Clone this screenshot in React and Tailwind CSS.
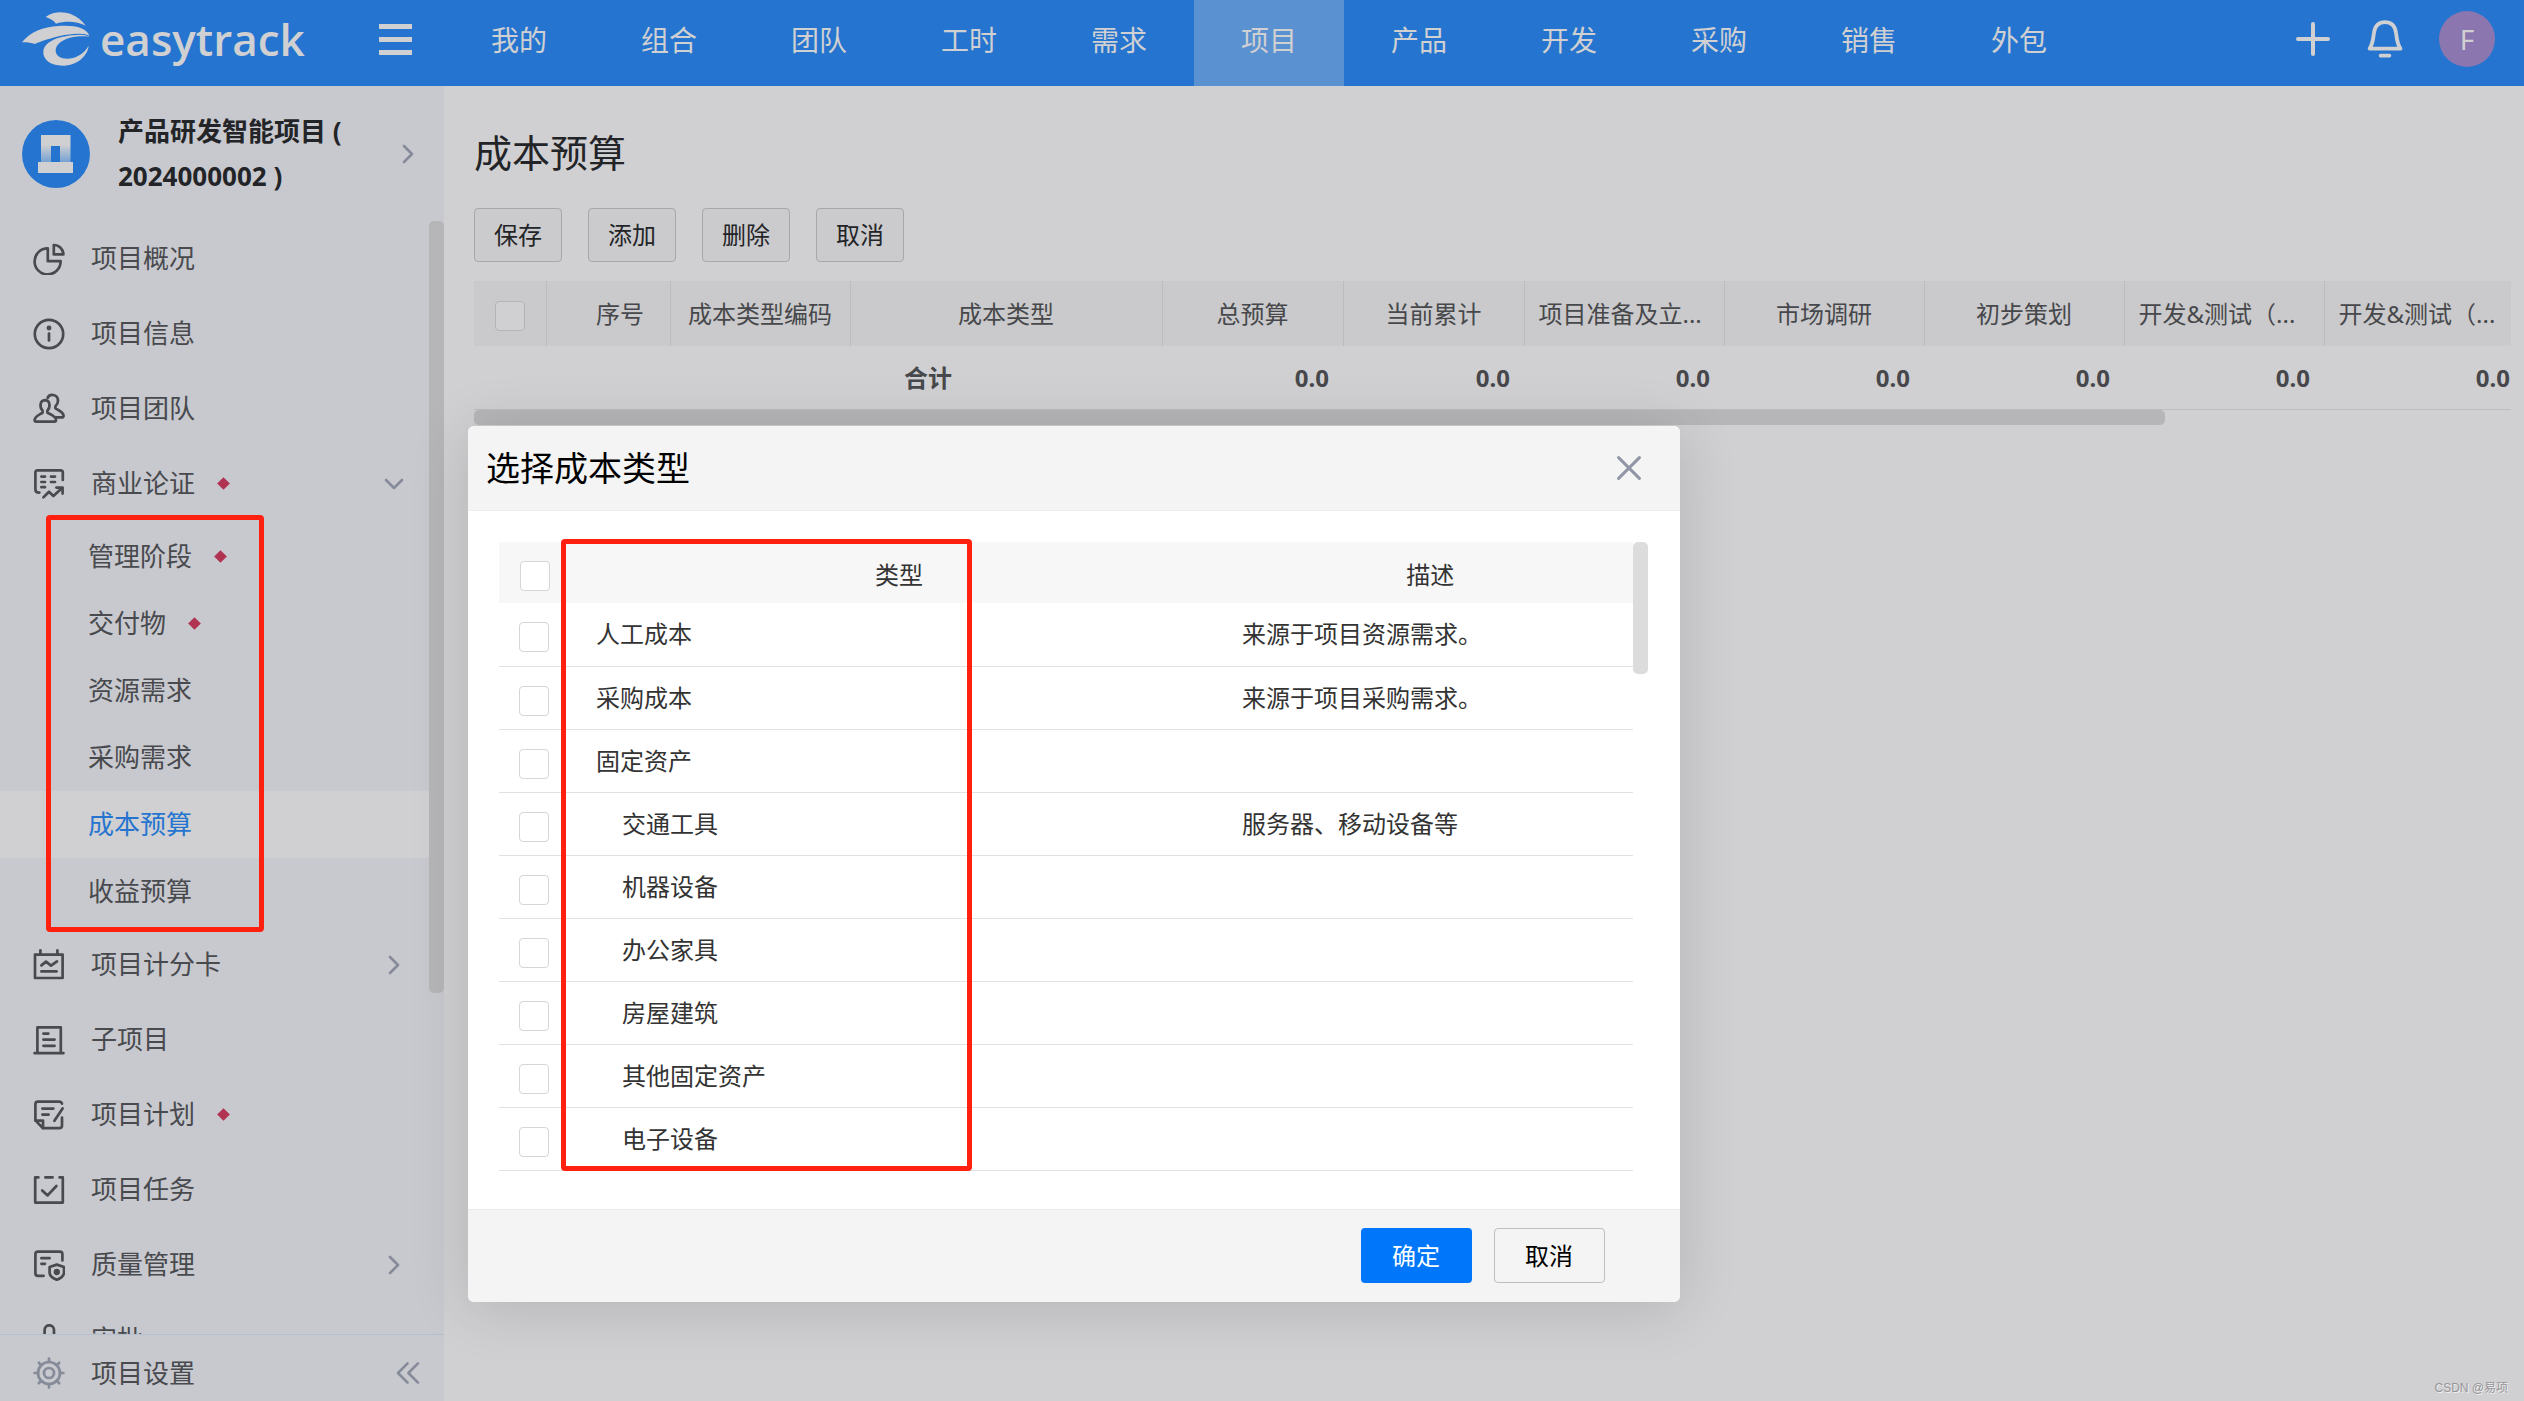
import { useState } from 'react';
import clsx from 'clsx';

const topMenus = ['我的', '组合', '团队', '工时', '需求', '项目', '产品', '开发', '采购', '销售', '外包'];

const icons = {
  overview: (
    <>
      <path d="M14.8 5.4 V18.2 H27.6 A13 13 0 1 1 14.8 5.4 Z" />
      <path d="M20.8 2 A9.6 9.6 0 0 1 30.4 11.4 H20.8 Z" />
    </>
  ),
  info: (
    <>
      <circle cx="16" cy="16" r="14.2" />
      <path d="M16 15.5 V22.5" />
      <circle cx="16" cy="10" r="1.1" />
    </>
  ),
  team: (
    <>
      <path d="M9.6 17.6 C6.5 14.5 6.5 7.4 12 7.2 C17.5 7.4 17.5 14.5 14.4 17.6 V19.6 C17 21.4 23 22.6 23 27 Q23 28.6 21.4 28.6 H3.2 Q1.6 28.6 1.6 27 C1.8 23 7.5 21.4 9.6 19.6 Z" />
      <path d="M14.6 5 C16 0.8 24.6 0.4 25 7.4 C25 10 23.8 12 22.4 13.4 V15.2 C25 17.4 30.6 18.8 30.6 23 Q30.4 24.4 28.6 24.4 H23" />
    </>
  ),
  business: (
    <>
      <path d="M29.8 12 V4.6 Q29.8 2.4 27.6 2.4 H4.6 Q2.4 2.4 2.4 4.6 V21.4 Q2.4 24.6 6.4 24.6" />
      <path d="M8.4 8.6 H12 M18 8.6 H22 M8.4 14 H12 M18 14 H22 M8.4 19.2 H12" />
      <path d="M10.4 29.4 L16 23.8 L20.4 28 L29 20 M23.4 19.6 H29.6 V25.6" />
    </>
  ),
  score: (
    <>
      <path d="M2 5.6 H29.6 V29 H2 Z M7.4 5.6 V1.4 M24.4 5.6 V1.4" />
      <path d="M8.4 16.4 L13 12.6 L18 16.6 L24 12.4 M8.4 22.4 H23.6" />
    </>
  ),
  sub: (
    <>
      <path d="M4.4 28.8 V3.4 H27.8 V28.8 M1.6 29.2 H30.4" />
      <path d="M10.4 9.6 H15.4 M10.4 15.6 H21.6 M10.4 21.8 H21.6" />
    </>
  ),
  plan: (
    <>
      <path d="M29 4.6 Q28.4 2.6 26.2 2.6 H5 Q2.4 2.6 2.4 5.2 V21.4 L10 29.2 H26.4 Q29 29.2 29 26.6 V18.6" />
      <path d="M2.4 21.6 H10 V29 M9.4 9.6 H20.4 M9.4 15.6 H15.6 M29.6 9.4 L21.4 21.8" />
    </>
  ),
  task: (
    <path d="M5.4 3.4 H2.2 V28.6 H29.8 V3.4 H26.6 M12.4 3.4 H19.6 M9.2 16.4 L14.6 21.4 L23.4 12" />
  ),
  quality: (
    <>
      <path d="M29.4 11.4 V5.2 Q29.4 2.6 26.8 2.6 H5 Q2.4 2.6 2.4 5.2 V24.2 Q2.4 26.8 5 26.8 H10.6 M8.4 9.2 H16.6 M8.4 14.8 H12" />
      <path d="M23.8 15.6 L31 18 V24 Q30.4 28.4 23.8 30.8 Q17.2 28.4 16.6 24 V18 Z" />
      <circle cx="23.8" cy="23" r="1.8" fill="currentColor" />
    </>
  ),
  approve: (
    <path d="M11.6 13 V6 A4.7 4.7 0 0 1 21 6 V13 L19 19 H28 V25 H4 V19 H13 Z" />
  ),
  setting: (
    <>
      <circle cx="16" cy="16" r="11" />
      <circle cx="16" cy="16" r="5" />
      <path d="M16 5 V1.6 M16 27 V30.4 M5 16 H1.6 M27 16 H30.4 M8.2 8.2 L5.8 5.8 M23.8 8.2 L26.2 5.8 M8.2 23.8 L5.8 26.2 M23.8 23.8 L26.2 26.2" />
    </>
  ),
};

const sideMenus = [
  { label: '项目概况', icon: 'overview' },
  { label: '项目信息', icon: 'info' },
  { label: '项目团队', icon: 'team' },
  {
    label: '商业论证',
    icon: 'business',
    mark: true,
    arrow: 'down',
    children: [
      { label: '管理阶段', mark: true },
      { label: '交付物', mark: true },
      { label: '资源需求' },
      { label: '采购需求' },
      { label: '成本预算', active: true },
      { label: '收益预算' },
    ],
  },
  { label: '项目计分卡', icon: 'score', arrow: 'right' },
  { label: '子项目', icon: 'sub' },
  { label: '项目计划', icon: 'plan', mark: true },
  { label: '项目任务', icon: 'task' },
  { label: '质量管理', icon: 'quality', arrow: 'right' },
  { label: '审批', icon: 'approve' },
];

const columns = [
  { label: '成本类型编码', width: 'w-[180px]' },
  { label: '成本类型', width: 'w-[312px]' },
  { label: '总预算', width: 'w-[181px]' },
  { label: '当前累计', width: 'w-[181px]' },
  { label: '项目准备及立...', width: 'w-[200px]', long: true },
  { label: '市场调研', width: 'w-[200px]' },
  { label: '初步策划', width: 'w-[200px]' },
  { label: '开发&测试（...', width: 'w-[200px]', long: true },
  { label: '开发&测试（...', width: 'w-[200px]', long: true },
];

const totals = ['0.0', '0.0', '0.0', '0.0', '0.0', '0.0', '0.0'];

const costTypes = [
  { name: '人工成本', desc: '来源于项目资源需求。' },
  { name: '采购成本', desc: '来源于项目采购需求。' },
  { name: '固定资产', desc: '' },
  { name: '交通工具', desc: '服务器、移动设备等', child: true },
  { name: '机器设备', desc: '', child: true },
  { name: '办公家具', desc: '', child: true },
  { name: '房屋建筑', desc: '', child: true },
  { name: '其他固定资产', desc: '', child: true },
  { name: '电子设备', desc: '', child: true },
];

function MenuIcon({ name, className }) {
  return (
    <svg
      className={clsx('size-8 shrink-0', className)}
      viewBox="0 0 32 32"
      fill="none"
      stroke="currentColor"
      strokeWidth="2.7"
      strokeLinecap="round"
      strokeLinejoin="round"
    >
      {icons[name]}
    </svg>
  );
}

function Chevron({ dir }) {
  return (
    <svg
      className={clsx('size-6 text-[#868b99]', dir === 'down' && 'rotate-90')}
      viewBox="0 0 24 24"
      fill="none"
      stroke="currentColor"
      strokeWidth="2.6"
      strokeLinecap="round"
      strokeLinejoin="round"
    >
      <path d="M8 4 L16 12 L8 20" />
    </svg>
  );
}

function Mark() {
  return <span className="ml-6 size-[9px] rotate-45 bg-[#b03352]" />;
}

function Logo() {
  return (
    <a href="#" className="flex items-center gap-[10px] pl-[22px] text-[#d0d0d2]">
      <svg className="h-[54px] w-[68px]" viewBox="66 36 204 162" fill="currentColor">
        <path d="M137 51 C160 33 190 34 212 42 C232 50 247 63 257 77 C232 63 195 62 168 71 C162 62 150 55 137 51 Z" />
        <path d="M66 127 C90 96 130 80 175 78 C225 75 262 84 268 108 C262 103 252 101 240 101 C200 100 160 112 133 121 C122 125 112 129 105 132 C92 128 78 126 66 127 Z" />
        <path d="M268 110 C215 104 168 122 167 152 C168 186 240 186 266 137 C262 172 226 197 188 197 C150 197 128 178 130 154 C133 122 180 106 240 104 C252 104 262 106 268 110 Z" />
      </svg>
      <span className="font-['Open_Sans',sans-serif] text-[44px] leading-[56px] font-semibold">easytrack</span>
    </a>
  );
}

function Header() {
  return (
    <header className="flex h-[86px] shrink-0 bg-[#2575d0] text-[#d0d0d2]">
      <div className="flex w-[444px] shrink-0 items-center justify-between pr-8 pb-2">
        <Logo />
        <button className="flex w-[33px] flex-col gap-2" aria-label="菜单">
          <span className="h-[5px] w-full bg-current" />
          <span className="h-[5px] w-full bg-current" />
          <span className="h-[5px] w-full bg-current" />
        </button>
      </div>
      <nav className="flex flex-1">
        {topMenus.map((menu) => (
          <a
            key={menu}
            href="#"
            className={clsx('flex w-[150px] items-center justify-center pb-[6px] text-[28px]', menu === '项目' && 'bg-[#5a91d0]')}
          >
            {menu}
          </a>
        ))}
      </nav>
      <div className="flex items-center gap-9 pr-[29px] pb-2">
        <button aria-label="新增">
          <svg className="size-9" viewBox="0 0 36 36" fill="none" stroke="currentColor" strokeWidth="4" strokeLinecap="round">
            <path d="M18 3 V33 M3 18 H33" />
          </svg>
        </button>
        <button aria-label="通知">
          <svg className="h-[38px] w-9" viewBox="0 0 36 38" fill="none" stroke="currentColor" strokeWidth="3.8" strokeLinecap="round" strokeLinejoin="round">
            <path d="M2.6 28.6 C6.4 23 6.2 17 7 12.6 C8 6 12 2.2 18 2.2 C24 2.2 28 6 29 12.6 C29.8 17 29.6 23 33.4 28.6 Z M13.6 35.6 H22.4" />
          </svg>
        </button>
        <button className="size-14 rounded-full bg-[#8b76b0] text-[28px] leading-[56px]">F</button>
      </div>
    </header>
  );
}

function Sidebar() {
  return (
    <aside className="relative flex w-[444px] shrink-0 flex-col bg-[#c8c9ce] text-[26px] text-[#494a4e]">
      <div className="flex h-[135px] shrink-0 items-center pr-6 pl-[22px]">
        <svg className="size-[68px] shrink-0" viewBox="0 0 68 68">
          <defs>
            <linearGradient id="door" x1="0" y1="0" x2="0" y2="1">
              <stop offset="0.35" stopColor="#d0d0d2" />
              <stop offset="1" stopColor="#6f9fd2" />
            </linearGradient>
          </defs>
          <circle cx="34" cy="34" r="34" fill="#2575d0" />
          <path d="M19 15 H48.5 V43 H38 V26 H29 V43 H19 Z" fill="url(#door)" />
          <path d="M16 42 H51 V53 H16 Z" fill="#d0d0d2" />
        </svg>
        <h2 className="ml-7 flex-1 pr-10 leading-[45px] font-bold text-[#232427]">产品研发智能项目 ( 2024000002 )</h2>
        <Chevron />
      </div>

      <nav className="relative min-h-0 flex-1 overflow-hidden">
        {sideMenus.map((item) => (
          <div key={item.label}>
            <a href="#" className="flex h-[75px] items-center pr-[38px] pl-[33px]">
              <MenuIcon name={item.icon} />
              <span className="ml-[26px]">{item.label}</span>
              {item.mark && <Mark />}
              {item.arrow && (
                <span className="ml-auto">
                  <Chevron dir={item.arrow} />
                </span>
              )}
            </a>
            {item.children && (
              <ul className="py-[2px]">
                {item.children.map((child) => (
                  <li key={child.label}>
                    <a
                      href="#"
                      className={clsx('flex h-[67px] items-center pl-[88px]', child.active && 'bg-[#d0d0d2] text-[#2575d0]')}
                    >
                      {child.label}
                      {child.mark && <Mark />}
                    </a>
                  </li>
                ))}
              </ul>
            )}
          </div>
        ))}
        {/* scrollbar */}
        <div className="absolute top-0 right-0 h-[772px] w-[15px] rounded-[5px] bg-[#b6b6b8]" />
      </nav>

      <div className="flex h-[67px] shrink-0 items-center border-t border-[#b3bfcc] pt-[10px] pr-6 pl-[33px]">
        <MenuIcon name="setting" className="text-[#868b99]" />
        <a href="#" className="ml-[26px]">项目设置</a>
        <button className="ml-auto text-[#868b99]" aria-label="收起">
          <svg className="size-6" viewBox="0 0 24 24" fill="none" stroke="currentColor" strokeWidth="2.6" strokeLinecap="round" strokeLinejoin="round">
            <path d="M11.6 2.4 L2 12 L11.6 21.6 M22 2.4 L12.4 12 L22 21.6" />
          </svg>
        </button>
      </div>

      {/* submenu highlight */}
      <div className="pointer-events-none absolute top-[429px] left-[46px] h-[417px] w-[218px] rounded-[4px] border-[5px] border-[#ff2010]" />
    </aside>
  );
}

function ToolButton({ children }) {
  return (
    <button className="h-[54px] w-[88px] rounded-[4px] border border-[#a8a8aa] bg-[#cbcbcd] text-[24px] text-[#232427]">
      {children}
    </button>
  );
}

function BudgetPage() {
  return (
    <main className="min-w-0 flex-1 pt-9 pr-[13px] pl-[30px]">
      <h1 className="text-[38px] leading-[60px] text-[#232427]">成本预算</h1>
      <div className="mt-[26px] flex gap-[26px]">
        <ToolButton>保存</ToolButton>
        <ToolButton>添加</ToolButton>
        <ToolButton>删除</ToolButton>
        <ToolButton>取消</ToolButton>
      </div>

      <div className="mt-[19px] overflow-hidden">
        <table className="w-[2050px] table-fixed text-[24px] text-[#47484b]">
          <thead>
            <tr className="h-[65px] bg-[#cacacc]">
              <th className="w-[72px] border-r border-[#bcbcbf] p-0 pt-1">
                <input type="checkbox" aria-label="全选预算" className="mx-auto block size-[30px] appearance-none rounded-[4px] border border-[#b4b4b7] bg-[#d0d0d2]" />
              </th>
              <th className="w-[124px] border-r border-[#bcbcbf] p-0 pl-6 font-normal">序号</th>
              {columns.map((col, i) => (
                <th
                  key={i}
                  className={clsx(
                    'border-r border-[#bcbcbf] p-0 pt-px font-normal whitespace-nowrap',
                    col.width,
                    col.long && 'pl-[14px] text-left'
                  )}
                >
                  {col.label}
                </th>
              ))}
            </tr>
          </thead>
          <tbody>
            <tr className="h-[63px] border-b border-[#bcbcbf] font-bold">
              <td colSpan={3} />
              <td className="pt-px pl-[54px]">合计</td>
              {totals.map((total, i) => (
                <td key={i} className="pt-px pr-[14px] text-right">{total}</td>
              ))}
            </tr>
          </tbody>
        </table>
        {/* horizontal scrollbar */}
        <div className="h-[15px] w-[83%] rounded-[5px] bg-[#b6b6b8]" />
      </div>
    </main>
  );
}

function Checkbox({ label }) {
  return (
    <input type="checkbox" aria-label={label} className="block size-[30px] appearance-none rounded-[4px] border border-[#d6d6d6] bg-white" />
  );
}

function CostTypeDialog({ onClose }) {
  return (
    <section
      role="dialog"
      aria-label="选择成本类型"
      className="absolute top-[426px] left-[468px] w-[48%] overflow-hidden rounded-[6px] bg-white shadow-[0_6px_60px_rgba(0,0,0,0.14)]"
    >
      <div className="flex h-[85px] items-center justify-between border-b border-[#ededed] bg-[#f4f4f4] pr-[39px] pl-[18px]">
        <h2 className="text-[34px] text-black">选择成本类型</h2>
        <button onClick={onClose} aria-label="关闭">
          <svg className="size-6" viewBox="0 0 24 24" fill="none" stroke="#9096a5" strokeWidth="3" strokeLinecap="round">
            <path d="M1.6 1.6 L22.4 22.4 M22.4 1.6 L1.6 22.4" />
          </svg>
        </button>
      </div>

      <div className="flex items-start pt-[31px] pr-8 pb-[38px] pl-[31px]">
        <table className="w-full table-fixed text-[24px] text-[#333]">
          <thead>
            <tr className="h-[61px] bg-[#f7f7f7]">
              <th className="w-[71px] p-0 pt-[6px] pl-[21px]">
                <Checkbox label="全选类型" />
              </th>
              <th className="w-[658px] p-0 pt-1 font-normal">类型</th>
              <th className="p-0 pt-1 font-normal">描述</th>
            </tr>
          </thead>
          <tbody>
            {costTypes.map((type) => (
              <tr key={type.name} className="h-[63px] border-b border-[#e1e1e1]">
                <td className="pt-[6px] pl-5">
                  <Checkbox label={type.name} />
                </td>
                <td className={type.child ? 'pl-[52px]' : 'pl-[26px]'}>{type.name}</td>
                <td className="pl-[14px]">{type.desc}</td>
              </tr>
            ))}
          </tbody>
        </table>
        <div className="h-[132px] w-[15px] shrink-0 rounded-[5px] bg-[#dcdcdc]" />
      </div>

      <div className="flex h-[93px] items-center justify-end gap-[22px] border-t border-[#ebebeb] bg-[#f4f4f4] pr-[75px] text-[24px]">
        <button className="h-[55px] w-[111px] rounded-[4px] bg-[#0077fb] text-white">确定</button>
        <button onClick={onClose} className="h-[55px] w-[111px] rounded-[4px] border border-[#bfbfbf] text-black">取消</button>
      </div>

      {/* type column highlight */}
      <div className="pointer-events-none absolute top-[113px] left-[93px] h-[632px] w-[411px] rounded-[4px] border-[5px] border-[#ff2010]" />
    </section>
  );
}

export default function App() {
  const [open, setOpen] = useState(true);

  return (
    <div className="relative flex h-screen flex-col overflow-hidden bg-[#d0d0d2] font-['Noto_Sans','Noto_Sans_CJK_SC',sans-serif]">
      <Header />
      <div className="flex min-h-0 flex-1">
        <Sidebar />
        <BudgetPage />
      </div>
      {open && <CostTypeDialog onClose={() => setOpen(false)} />}
      <span className="absolute right-4 bottom-1 font-['Liberation_Sans','Noto_Sans_CJK_SC',sans-serif] text-[12px] text-[#96969a] [text-shadow:1px_1px_0_#eee]">CSDN @易项</span>
    </div>
  );
}
